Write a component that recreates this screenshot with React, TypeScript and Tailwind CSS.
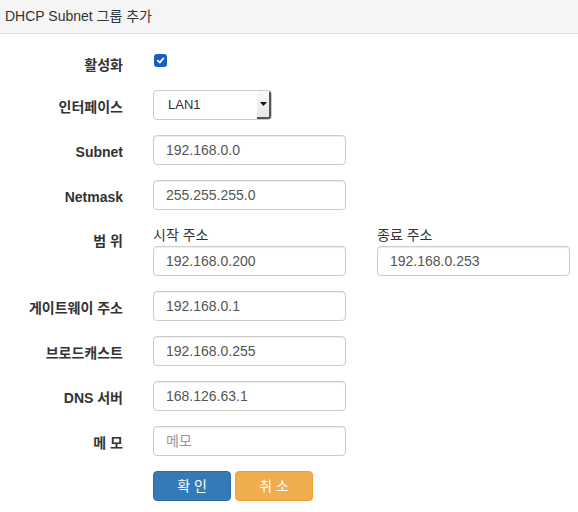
import { ReactNode } from "react";

const font = { fontFamily: '"Liberation Sans", "Noto Sans CJK KR", sans-serif' };

const inputCls =
  "h-[30px] w-[193px] rounded-[4px] border border-[#ccc] bg-white px-[12px] text-[14px] text-[#555] shadow-[inset_0_1px_1px_rgba(0,0,0,0.075)] outline-none placeholder:text-[#999]";

const Row = ({ label, children, labelPad = "pt-[7px]" }: { label: string; children: ReactNode; labelPad?: string }) => (
  <div className="flex items-start">
    <div className={`w-[123px] shrink-0 text-right text-[14px] font-bold leading-5 text-[#333] ${labelPad}`}>{label}</div>
    <div className="ml-[30px]">{children}</div>
  </div>
);

const Field = ({ value, placeholder }: { value?: string; placeholder?: string }) => (
  <input className={inputCls} defaultValue={value} placeholder={placeholder} readOnly style={font} />
);

export default function App() {
  return (
    <div className="h-[512px] w-[578px] bg-white text-[#333]" style={font}>
      {/* panel heading */}
      <div className="flex h-[34px] items-center border-b border-[#ddd] bg-[#f5f5f5] px-[5px] text-[14px]">
        DHCP Subnet 그룹 추가
      </div>

      <div className="flex flex-col gap-[15px] pt-[12px]">
        <Row label="활성화" labelPad="pt-[9px]">
          <div className="mt-[8px] ml-[1px] flex h-[13px] w-[13px] items-center justify-center rounded-[3px] bg-[#1560c4]">
            <svg width="9" height="9" viewBox="0 0 10 10">
              <path d="M2 5.2 L4.2 7.4 L8.2 2.6" fill="none" stroke="white" strokeWidth="1.9" strokeLinecap="round" strokeLinejoin="round" />
            </svg>
          </div>
        </Row>

        <Row label="인터페이스">
          <div className="flex h-[30px] w-[119px] overflow-hidden rounded-[4px] border border-[#ccc] bg-white">
            <div className="flex flex-1 items-center pl-[14px] text-[13px] text-[#333]">LAN1</div>
            <div className="flex w-[14px] items-center justify-center border-r-2 border-b-2 border-[#555] bg-gradient-to-b from-[#fafafa] to-[#e6e6e6]">
              <svg width="7" height="4" viewBox="0 0 7 4">
                <path d="M0 0 H7 L3.5 4 Z" fill="#111" />
              </svg>
            </div>
          </div>
        </Row>

        <Row label="Subnet">
          <Field value="192.168.0.0" />
        </Row>

        <Row label="Netmask">
          <Field value="255.255.255.0" />
        </Row>

        <Row label="범 위" labelPad="pt-[6px]">
          <div className="flex gap-[31px]">
            <div className="flex flex-col">
              <div className="mb-[1px] text-[14px] leading-5">시작 주소</div>
              <Field value="192.168.0.200" />
            </div>
            <div className="flex flex-col">
              <div className="mb-[1px] text-[14px] leading-5">종료 주소</div>
              <Field value="192.168.0.253" />
            </div>
          </div>
        </Row>

        <Row label="게이트웨이 주소">
          <Field value="192.168.0.1" />
        </Row>

        <Row label="브로드캐스트">
          <Field value="192.168.0.255" />
        </Row>

        <Row label="DNS 서버">
          <Field value="168.126.63.1" />
        </Row>

        <Row label="메 모">
          <Field placeholder="메모" />
        </Row>

        <div className="ml-[153px] flex gap-[4px]">
          <button className="h-[30px] w-[78px] rounded-[4px] border border-[#2e6da4] bg-[#337ab7] text-[14px] text-white">
            확 인
          </button>
          <button className="h-[30px] w-[78px] rounded-[4px] border border-[#eea236] bg-[#f0ad4e] text-[14px] text-white">
            취 소
          </button>
        </div>
      </div>
    </div>
  );
}
